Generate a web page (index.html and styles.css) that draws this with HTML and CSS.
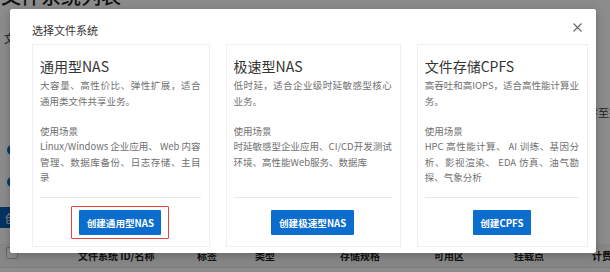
FILE: index.html
```html
<!DOCTYPE html>
<html lang="zh-CN">
<head>
<meta charset="utf-8">
<title>选择文件系统</title>
<link rel="stylesheet" href="styles.css">
</head>
<body>
  <div class="page">
    <h1 class="page-title">文件系统列表</h1>
    <p class="page-desc">文件</p>
    <p class="notice">跳转至挂载点页面查看详情</p>
    <div class="opts">
      <div class="opt"><span class="radio"></span></div>
      <div class="opt"><span class="radio"></span></div>
    </div>
    <div class="actions"><span class="create-btn">创建文件系统</span></div>
    <div class="thead">
      <span class="th th-check"><span class="checkbox"></span></span>
      <span class="th">文件系统 ID/名称</span>
      <span class="th">标签</span>
      <span class="th">类型</span>
      <span class="th">存储规格</span>
      <span class="th">可用区</span>
      <span class="th">挂载点</span>
      <span class="th">计费方式</span>
    </div>
  </div>

  <div class="mask"></div>

  <div class="modal">
    <div class="modal-head">选择文件系统</div>
    <svg class="close" width="9" height="9" viewBox="0 0 9 9"><path d="M0.5 0.5L8.5 8.5M8.5 0.5L0.5 8.5" stroke="#666" stroke-width="1.1" fill="none"/></svg>
    <div class="cards">
      <div class="card">
        <div class="card-body">
          <h3 class="card-title">通用型NAS</h3>
          <p class="text desc"><span>大容量、高性价比、弹性扩展，适合</span><span class="last">通用类文件共享业务。</span></p>
          <p class="text label">使用场景</p>
          <p class="text"><span>Linux/Windows 企业应用、 Web 内容</span><span>管理、数据库备份、日志存储、主目</span><span class="last">录</span></p>
        </div>
        <div class="card-foot">
          <span class="btn-wrap"><span class="btn">创建通用型NAS</span><span class="highlight"></span></span>
        </div>
      </div>
      <div class="card">
        <div class="card-body">
          <h3 class="card-title">极速型NAS</h3>
          <p class="text desc"><span>低时延，适合企业级时延敏感型核心</span><span class="last">业务。</span></p>
          <p class="text label">使用场景</p>
          <p class="text"><span>时延敏感型企业应用、CI/CD开发测试</span><span class="last">环境、高性能Web服务、数据库</span></p>
        </div>
        <div class="card-foot">
          <span class="btn">创建极速型NAS</span>
        </div>
      </div>
      <div class="card">
        <div class="card-body">
          <h3 class="card-title">文件存储CPFS</h3>
          <p class="text desc"><span>高吞吐和高IOPS，适合高性能计算业</span><span class="last">务。</span></p>
          <p class="text label">使用场景</p>
          <p class="text"><span>HPC 高性能计算、 AI 训练、基因分</span><span>析、影视渲染、 EDA 仿真、油气勘</span><span class="last">探、气象分析</span></p>
        </div>
        <div class="card-foot">
          <span class="btn">创建CPFS</span>
        </div>
      </div>
    </div>
  </div>
</body>
</html>
```

FILE: styles.css
```css
* { box-sizing: border-box; }

html, body {
  margin: 0;
  padding: 0;
}

body {
  width: 610px;
  height: 272px;
  overflow: hidden;
  position: relative;
  background: #fff;
  font-family: "Noto Sans CJK SC", "Noto Sans", sans-serif;
  color: #333;
}

/* ---------- background page ---------- */
.page {
  display: flex;
  flex-direction: column;
  margin-top: -16px;
  white-space: nowrap;
}

.page-title {
  margin: 0;
  padding-left: 1px;
  font-size: 20px;
  line-height: 24px;
  font-weight: 500;
  color: #222;
}

.page-desc {
  margin: 22px 0 0;
  padding-left: 4px;
  font-size: 11px;
  line-height: 16px;
  color: #222;
}

.notice {
  margin: 58px 0 0;
  padding-left: 576px;
  font-size: 11px;
  line-height: 16px;
  color: #444;
}

.opts {
  margin-top: 14px;
  display: flex;
  flex-direction: column;
}

.opt {
  display: flex;
  align-items: center;
  height: 32px;
  padding-left: 7px;
}

.radio {
  width: 10px;
  height: 10px;
  border-radius: 50%;
  background: #0a66c2;
}

.actions {
  margin-top: 9px;
  height: 21px;
  display: flex;
}

.create-btn {
  display: inline-flex;
  align-items: center;
  height: 21px;
  padding: 0 6px 0 5px;
  background: #0a5fb4;
  color: #fff;
  font-size: 11px;
}

.thead {
  margin-top: 16px;
  height: 24px;
  display: grid;
  grid-template-columns: 78px 119px 58px 85px 94px 80px 78px 1fr;
  align-items: center;
  background: #f4f4f4;
  border-bottom: 1px solid #e0e0e0;
  font-size: 10px;
  font-weight: 700;
  color: #222;
}

.th-check {
  padding-left: 6px;
  display: flex;
  margin-top: -5px;
}

.checkbox {
  width: 12px;
  height: 12px;
  border: 1px solid #bbb;
  border-radius: 2px;
  background: #fff;
}

.mask {
  position: absolute;
  inset: 0;
  background: rgba(0, 0, 0, 0.45);
}

/* ---------- modal ---------- */
.modal {
  position: absolute;
  left: 10px;
  top: 9px;
  width: 586px;
  height: 244px;
  background: #fff;
  border-radius: 2px;
  box-shadow: 0 2px 10px rgba(0, 0, 0, 0.25);
  padding: 13px 20px 6px 22px;
  display: flex;
  flex-direction: column;
}

.modal-head {
  font-size: 11px;
  line-height: 16px;
  color: #333;
  height: 22px;
}

.close {
  position: absolute;
  top: 14px;
  right: 14px;
}

.cards {
  flex: 1;
  display: grid;
  grid-template-columns: repeat(3, 1fr);
  gap: 16px;
}

.card {
  border: 1px solid #efefef;
  display: flex;
  flex-direction: column;
}

.card-body {
  flex: 1;
  padding: 11px 8px 0 7px;
}

.card-title {
  margin: 0;
  font-size: 14px;
  line-height: 20px;
  font-weight: 400;
  color: #333;
}

.text {
  margin: 0;
  font-size: 9.5px;
  line-height: 15.5px;
  color: #707070;
}

.text span {
  display: block;
  text-align: justify;
  text-align-last: justify;
  white-space: nowrap;
}

.text span.last {
  text-align-last: left;
}

.desc {
  margin-top: 2px;
  min-height: 31px;
}

.label {
  margin-top: 14.5px;
}

.card-foot {
  margin: 0 8px 0 7px;
  border-top: 1px solid #e8e8e8;
  padding: 12px 0 11px;
  display: flex;
  justify-content: center;
}

.btn-wrap {
  position: relative;
  display: inline-flex;
}

.btn {
  display: inline-flex;
  align-items: center;
  height: 25px;
  padding: 0 7.5px;
  background: #0b6dcd;
  color: #fff;
  font-size: 9.6px;
  font-weight: 700;
  border-radius: 1px;
}

.highlight {
  position: absolute;
  top: -4px;
  bottom: -4px;
  left: -8px;
  right: -8px;
  border: 1.5px solid #e8423c;
  border-radius: 1px;
}
```
